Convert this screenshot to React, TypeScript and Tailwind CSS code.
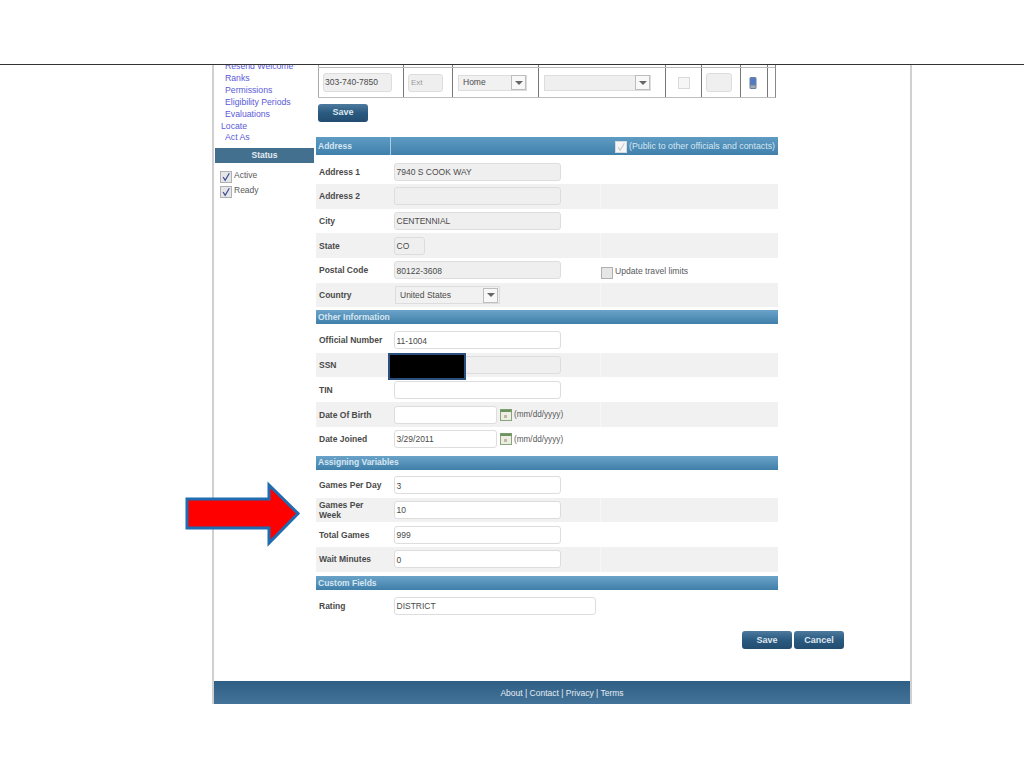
import React from 'react';

const linkClass = 'text-[8.7px] leading-[12px] text-[#5a5ad8]';

function Check({ light }: { light?: boolean }) {
  return (
    <svg viewBox="0 0 12 12" className="w-[10px] h-[10px]">
      <path d="M2.5 6 L5 10 L10 1.5" fill="none" stroke={light ? '#c9ced4' : '#3a4f9a'} strokeWidth="1.5" />
    </svg>
  );
}

function CheckBox({ checked, light }: { checked?: boolean; light?: boolean }) {
  return (
    <div className={`w-[12px] h-[12px] shrink-0 flex items-center justify-center border ${light ? 'bg-[#f6f6f6] border-[#d4dade]' : 'bg-[#e6e6e6] border-[#b0b0b0]'}`}>
      {checked && <Check light={light} />}
    </div>
  );
}

function Arrow() {
  return (
    <div className="w-[15px] h-[15px] flex items-center justify-center bg-[#f8f8f8] border border-[#bdbdbd]">
      <div className="w-0 h-0 border-x-[4px] border-x-transparent border-t-[4px] border-t-[#666666]" />
    </div>
  );
}

function Button({ label }: { label: string }) {
  return (
    <div className="w-[50px] h-[18px] rounded-[3px] flex items-center justify-center text-[9px] font-bold text-[#dfe7ee] bg-linear-to-b from-[#4d7a9e] via-[#2a5a80] to-[#234d70]">
      {label}
    </div>
  );
}

function Field({ value, width, disabled }: { value?: string; width: string; disabled?: boolean }) {
  return (
    <div className={`${width} h-[18px] flex items-center pt-px px-[1.5px] rounded-[3px] border text-[8.5px] text-[#4a4a4a] ${disabled ? 'bg-[#efefef] border-[#dddddd]' : 'bg-white border-[#dddddd]'}`}>
      {value}
    </div>
  );
}

function SectionHeader({ title, className }: { title: string; className: string }) {
  return (
    <div className={`h-[14px] flex items-center pl-[2px] text-[8.5px] font-bold text-[#d5e6f2] bg-linear-to-b from-[#6ba3c8] to-[#3f7fa9] ${className}`}>
      {title}
    </div>
  );
}

function Row({ label, shaded, children, right }: { label: string; shaded?: boolean; children: React.ReactNode; right?: React.ReactNode }) {
  return (
    <div className={`h-[24.7px] flex items-center ${shaded ? 'bg-[#f1f1f1]' : ''}`}>
      <div className="w-[78px] pl-[3px] pr-[9px] text-[8.5px] leading-[10px] font-bold text-[#4a4a4a]">{label}</div>
      <div className="w-[206px] flex items-center gap-[3px]">{children}</div>
      <div className={`flex-1 h-full flex items-center ${shaded ? 'border-l border-[#f7f7f7]' : ''}`}>{right}</div>
    </div>
  );
}

function DateHint() {
  return (
    <>
      <svg viewBox="0 0 12 12" className="w-[12px] h-[12px] shrink-0">
        <rect x="0.5" y="0.5" width="11" height="11" fill="#eceee4" stroke="#8aa578" />
        <rect x="0.5" y="0.5" width="11" height="2.5" fill="#6b9460" />
        <rect x="4" y="6" width="3" height="3" fill="#c4b5a5" />
      </svg>
      <span className="-ml-px pt-px text-[8.2px] text-[#5a5a5a]">(mm/dd/yyyy)</span>
    </>
  );
}

function TopCell({ width, children, last }: { width: string; children?: React.ReactNode; last?: boolean }) {
  return (
    <div className={`${width} shrink-0 h-full flex items-center pt-[3px] ${last ? '' : 'border-r border-[#777777]'}`}>
      {children}
    </div>
  );
}

export default function App() {
  return (
    <div className="relative w-[1024px] h-[768px] bg-white overflow-hidden font-['Liberation_Sans',Arial,sans-serif]">
      <div className="h-[65px] border-b border-[#333333]" />

      <div className="ml-[212px] w-[700px] h-[639px] border-x-2 border-[#d0d0d0] flex flex-col overflow-hidden">
        <div className="flex-1 flex min-h-0">
          {/* Sidebar */}
          <div className="ml-px w-[99px] shrink-0 -mt-[5px]">
            <div className="pl-[10px]">
              <div className={linkClass}>Resend Welcome</div>
              <div className={linkClass}>Ranks</div>
              <div className={linkClass}>Permissions</div>
              <div className={linkClass}>Eligibility Periods</div>
              <div className={linkClass}>Evaluations</div>
            </div>
            <div className="pl-[6px]">
              <div className={linkClass}>Locate</div>
              <div className="pl-[4px] text-[8.7px] leading-[10px] text-[#5a5ad8]">Act As</div>
            </div>
            <div className="mt-[6px] h-[15px] flex items-center justify-center text-[8.5px] font-bold text-[#e4ecf2] bg-[#44708f]">Status</div>
            <div className="mt-[8px] pl-[5px] flex flex-col gap-[3px]">
              <div className="h-[12px] flex items-center gap-[2px] text-[8.5px] text-[#5a5a5a]"><CheckBox checked /><span className="-mt-[3px]">Active</span></div>
              <div className="h-[12px] flex items-center gap-[2px] text-[8.5px] text-[#5a5a5a]"><CheckBox checked /><span className="-mt-[3px]">Ready</span></div>
            </div>
          </div>

          {/* Main form */}
          <div className="ml-[2px] w-[462px] shrink-0">
            <div className="relative ml-[2px] w-[458px] h-[33px] flex border-b border-[#bdbdbd] border-r border-r-[#888888]">
              <div className="absolute left-0 right-0 top-[2px] h-px bg-[#bdbdbd]" />
              <TopCell width="w-[86px] border-l border-l-[#aaaaaa] pl-[4px]">
                <div className="w-[69px] h-[19px] flex items-center px-[1px] rounded-[3px] border border-[#dddddd] bg-[#efefef] text-[8.5px] text-[#4a4a4a]">303-740-7850</div>
              </TopCell>
              <TopCell width="w-[49px] pl-[4px]">
                <div className="w-[35px] h-[18px] flex items-center px-[2px] rounded-[3px] border border-[#dddddd] bg-[#efefef] text-[8px] text-[#9a9a9a]">Ext</div>
              </TopCell>
              <TopCell width="w-[86px] pl-[5px]">
                <div className="w-[69px] h-[16px] flex items-center justify-between pl-[4px] border border-[#dddddd] bg-[#f1f1f1] text-[8.5px] text-[#4a4a4a]">Home<Arrow /></div>
              </TopCell>
              <TopCell width="w-[127px] pl-[5px]">
                <div className="w-[107px] h-[16px] flex items-center justify-end border border-[#dddddd] bg-[#efefef]"><Arrow /></div>
              </TopCell>
              <TopCell width="w-[36px] justify-center"><CheckBox light /></TopCell>
              <TopCell width="w-[39px] pl-[4px]">
                <div className="w-[26px] h-[19px] rounded-[3px] border border-[#dddddd] bg-[#efefef]" />
              </TopCell>
              <TopCell width="w-[27px] pl-[8px]">
                <svg viewBox="0 0 8 12" className="w-[8px] h-[12px]">
                  <rect x="0.5" y="0" width="7" height="12" rx="1.5" fill="#6a7f9f" />
                  <rect x="1.5" y="1.5" width="5" height="6" fill="#4f7cc4" />
                  <rect x="1.5" y="8.5" width="5" height="2.5" fill="#a5abb2" />
                </svg>
              </TopCell>
              <TopCell width="w-[7px]" last />
            </div>
            <div className="ml-[2px] mt-[6px]"><Button label="Save" /></div>

            <div className="mt-[15px] h-[18px] flex items-center text-[8.5px] font-bold text-[#d5e6f2] bg-linear-to-b from-[#5f9cc4] to-[#3f80ab]">
              <div className="w-[75px] h-full flex items-center pl-[2px] border-r border-[#a9cde3]">Address</div>
              <div className="flex-1 flex items-center justify-end gap-[2px] pr-[3px] pt-px font-normal text-[8.8px]">
                <CheckBox checked light />
                (Public to other officials and contacts)
              </div>
            </div>
            <div className="mt-[4.3px]">
              <Row label="Address 1"><Field value="7940 S COOK WAY" width="w-[167px]" disabled /></Row>
              <Row label="Address 2" shaded><Field width="w-[167px]" disabled /></Row>
              <Row label="City"><Field value="CENTENNIAL" width="w-[167px]" disabled /></Row>
              <Row label="State" shaded><Field value="CO" width="w-[31px]" disabled /></Row>
              <Row
                label="Postal Code"
                right={
                  <div className="ml-px mt-[5px] flex items-center gap-[2px] text-[8.6px] text-[#5a5a5a]">
                    <CheckBox />
                    <span className="-mt-[3px]">Update travel limits</span>
                  </div>
                }
              >
                <Field value="80122-3608" width="w-[167px]" disabled />
              </Row>
              <Row label="Country" shaded>
                <div className="ml-px w-[105px] h-[18px] flex items-center justify-between pl-[4px] pr-[1px] border border-[#dddddd] bg-[#f1f1f1] text-[8.5px] text-[#4a4a4a]">
                  United States
                  <Arrow />
                </div>
              </Row>
            </div>

            <SectionHeader title="Other Information" className="mt-[2.7px]" />
            <div className="mt-[4px]">
              <Row label="Official Number"><Field value="11-1004" width="w-[167px]" /></Row>
              <Row label="SSN" shaded><Field width="w-[167px]" disabled /></Row>
              <Row label="TIN"><Field width="w-[167px]" /></Row>
              <Row label="Date Of Birth" shaded><Field width="w-[103px]" /><DateHint /></Row>
              <Row label="Date Joined"><Field value="3/29/2011" width="w-[103px]" /><DateHint /></Row>
            </div>

            <SectionHeader title="Assigning Variables" className="mt-[4.3px]" />
            <div className="mt-[3.2px]">
              <Row label="Games Per Day"><Field value="3" width="w-[167px]" /></Row>
              <Row label="Games Per Week" shaded><Field value="10" width="w-[167px]" /></Row>
              <Row label="Total Games"><Field value="999" width="w-[167px]" /></Row>
              <Row label="Wait Minutes" shaded><Field value="0" width="w-[167px]" /></Row>
            </div>

            <SectionHeader title="Custom Fields" className="mt-[4.5px]" />
            <div className="mt-[3.5px]">
              <Row label="Rating"><Field value="DISTRICT" width="w-[202px]" /></Row>
            </div>

            <div className="mt-[13px] w-[528px] flex justify-end gap-[2px]">
              <Button label="Save" />
              <Button label="Cancel" />
            </div>
          </div>
        </div>

        <div className="h-[23px] shrink-0 flex items-center justify-center pt-[2px] text-[8.5px] text-[#e6edf3] bg-linear-to-b from-[#2f5f85] to-[#44739a]">
          About | Contact | Privacy | Terms
        </div>
      </div>

      {/* SSN redaction laid over the form */}
      <div className="absolute left-[388px] top-[353px] w-[78px] h-[27px] bg-black border-2 border-[#2b4f7e]" />

      {/* Callout arrow laid over the page */}
      <svg className="absolute left-[184px] top-[481px] w-[118px] h-[66px]" viewBox="184 481 118 66">
        <polygon points="187,499 269,499 269,485 298,513.5 269,543 269,528 187,528" fill="#ff0000" stroke="#1f6db0" strokeWidth="3" />
      </svg>
    </div>
  );
}
